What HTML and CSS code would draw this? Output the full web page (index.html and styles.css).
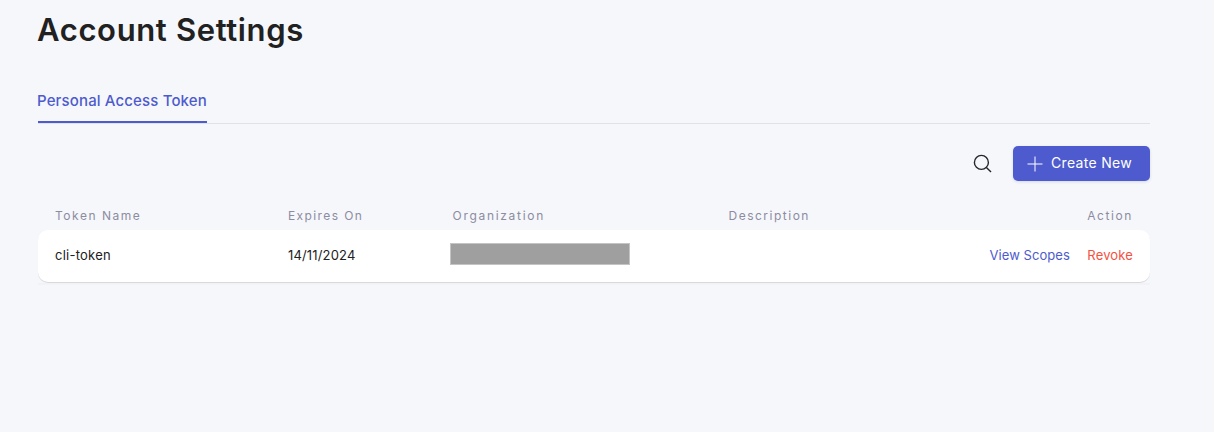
FILE: index.html
```html
<!DOCTYPE html>
<html lang="en">
<head>
<meta charset="utf-8">
<title>Account Settings</title>
<link rel="stylesheet" href="styles.css">
</head>
<body>
<main class="page">
  <h1 class="title">Account Settings</h1>
  <nav class="tabs"><a class="tab">Personal Access Token</a></nav>
  <div class="toolbar">
    <svg class="search" width="20" height="20" viewBox="0 0 20 20"><circle cx="8.4" cy="8.4" r="7"/><path d="M13.4 13.4 18 17.9"/></svg>
    <button class="create">
      <svg class="plus" width="16" height="16" viewBox="0 0 16 16"><path d="M8 .5v15M.5 8h15"/></svg>
      <span class="create-label">Create New</span>
    </button>
  </div>
  <section class="table">
    <div class="row head">
      <span class="h-name">Token Name</span>
      <span class="h-expires">Expires On</span>
      <span class="h-org">Organization</span>
      <span class="h-desc">Description</span>
      <span class="h-action">Action</span>
    </div>
    <div class="card-shadow">
      <div class="row card">
        <span class="c-name">cli-token</span>
        <span class="c-date">14/11/2024</span>
        <span class="redacted"></span>
        <span></span>
        <span class="actions"><a class="view">View Scopes</a><a class="revoke">Revoke</a></span>
      </div>
    </div>
  </section>
</main>
</body>
</html>
```
FILE: styles.css
```css
* { box-sizing: border-box; }
body {
  margin: 0;
  background: #f6f7fb;
  color: #212121;
  font-family: Inter, "Liberation Sans", sans-serif;
}
.page { width: 1150px; height: 432px; padding: 10px 0 0 38px; }
.title { margin: 0 0 0 -1px; font-size: 31px; line-height: 40px; font-weight: 600; letter-spacing: 0.64px; }
.tabs { display: flex; height: 43px; margin-top: 31px; border-bottom: 1px solid #e1e2e9; }
.tab {
  width: 169px;
  height: 42px;
  border-bottom: 2px solid #4d5bce;
  color: #4d5bce;
  font-size: 15px;
  line-height: 40px;
  font-weight: 500;
  letter-spacing: 0.14px;
  text-indent: -1px;
  white-space: nowrap;
}
.toolbar { display: flex; justify-content: flex-end; align-items: center; gap: 20px; height: 35px; margin-top: 22px; }
.search { fill: none; stroke: #26262a; stroke-width: 1.4; }
.create {
  display: flex;
  align-items: center;
  gap: 8px;
  width: 137px;
  height: 35px;
  padding: 0 0 0 14px;
  border: 0;
  border-radius: 5px;
  background: #4d5bce;
  box-shadow: 0 1px 3px rgba(40, 45, 90, .15);
  color: #fff;
  font: 400 14px/33px Inter, sans-serif;
  letter-spacing: 0.32px;
  white-space: nowrap;
}
.create-label { height: 35px; }
.plus { fill: none; stroke: #fff; stroke-width: 1; }
.table { margin-top: 22px; }
.row { display: grid; grid-template-columns: 233px 164.5px 276px 1fr auto; padding: 0 17px; align-items: center; }
.head { height: 27px; padding-bottom: 1px; color: #8c8ca1; font-size: 12px; line-height: 26px; }
.h-name { letter-spacing: 1.53px; }
.h-expires { letter-spacing: 1.4px; }
.h-org { letter-spacing: 1.7px; }
.h-desc { letter-spacing: 1.5px; }
.h-action { letter-spacing: 1.6px; }
.card-shadow {
  height: 55px;
  background: linear-gradient(#f6f7fb 53px, #f0f0f5 53px, #f3f4f8 55px);
}
.card {
  height: 52px;
  border-radius: 10px;
  background: #fff;
  box-shadow: 0 1px 0 #d9d9dd;
  font-size: 13px;
  line-height: 50px;
  align-items: start;
}
.c-name { letter-spacing: 0.24px; }
.c-date { letter-spacing: 0.16px; }
.redacted { width: 180px; height: 22px; margin: 13px 0 0 -3px; background: #9f9f9f; border: 1px solid #c4c4c4; }
.actions { display: flex; gap: 17.5px; }
.view { color: #4d5bce; letter-spacing: 0.05px; }
.revoke { color: #f4523f; letter-spacing: 0.15px; }
```
